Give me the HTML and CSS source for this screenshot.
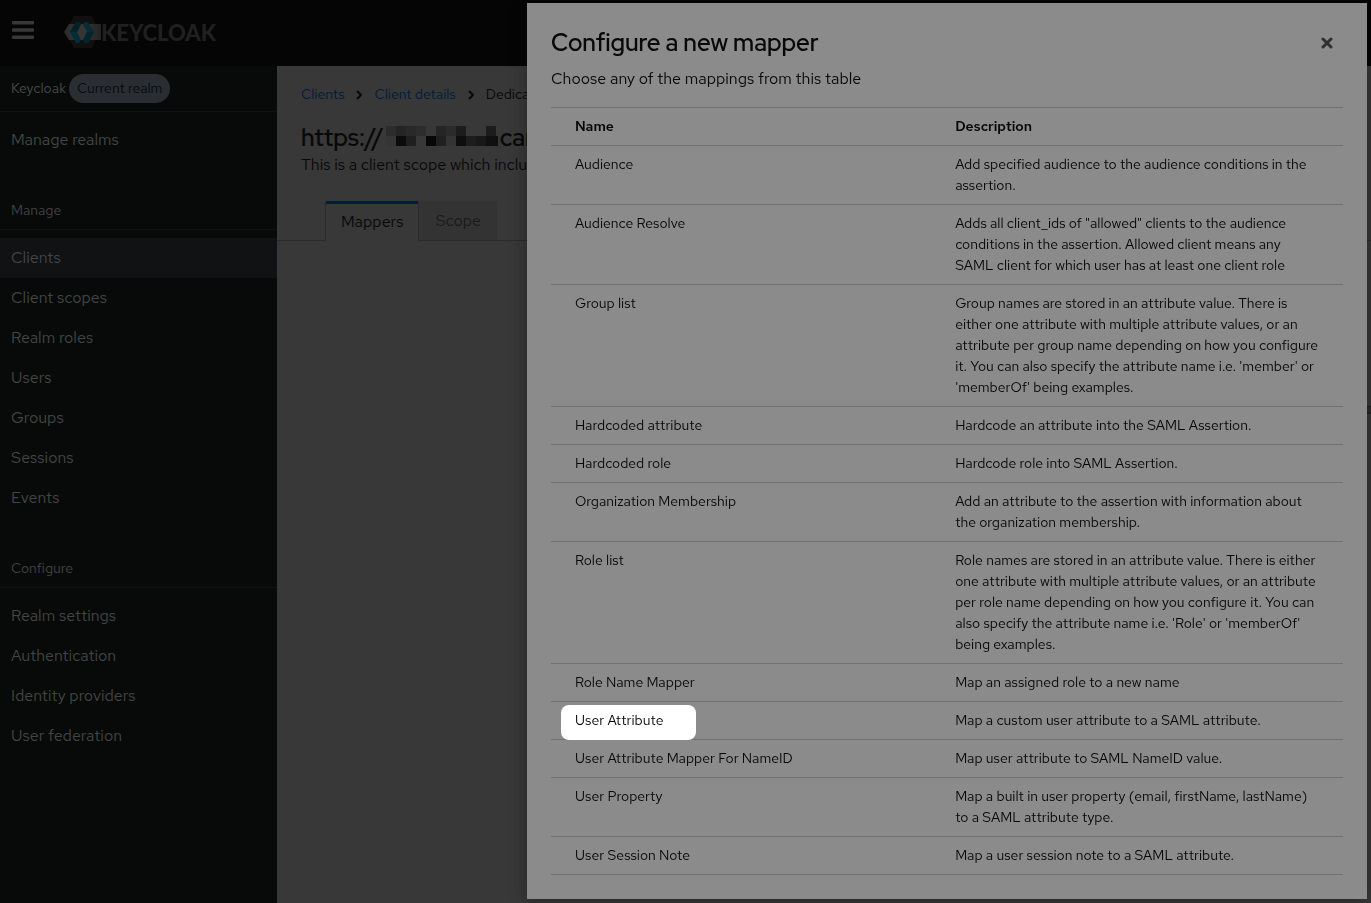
FILE: index.html
```html
<!DOCTYPE html>
<html lang="en">
<head>
<meta charset="utf-8">
<title>Keycloak Administration Console</title>
<link rel="stylesheet" href="styles.css">
</head>
<body>
<div class="page">
  <header class="masthead">
    <button type="button" class="menu-toggle" aria-label="Global navigation">
      <svg width="22" height="18" viewBox="0 0 22 18" fill="currentColor"><rect width="22" height="3.4" rx="1"/><rect y="7.3" width="22" height="3.4" rx="1"/><rect y="14.6" width="22" height="3.4" rx="1"/></svg>
    </button>
    <a class="brand" href="#">
      <svg width="37" height="32" viewBox="0 0 37 32">
        <defs>
          <linearGradient id="band" x1="0" x2="1"><stop offset="0" stop-color="#2c2c2c"/><stop offset=".5" stop-color="#363636"/><stop offset="1" stop-color="#232323"/></linearGradient>
        </defs>
        <path d="M10 0h18l7 16-7 16H10L2 16z" fill="#101010"/>
        <path d="M5 8h32v16H5L0 16z" fill="url(#band)"/>
        <path d="M16 8h6l4 8-4 8h-6l-4-8z" fill="#363636"/>
        <path d="M12 6h3l2 2-4 8 4 8-2 3h-3L6 16z" fill="#062c35"/>
        <path d="M12 6h3l2 2-4 8H6z" fill="#052229"/>
        <path d="M24 6h-3l-2 2 4 8-4 8 2 3h3l6-11z" fill="#062c35"/>
        <path d="M23 16h7l-6 11h-3l-2-3z" fill="#05252d"/>
      </svg>
      <span>KEYCLOAK</span>
    </a>
  </header>

  <nav class="sidebar">
    <div class="realm">Keycloak <span class="realm-label">Current realm</span></div>
    <ul class="nav-list">
      <li><a href="#">Manage realms</a></li>
    </ul>
    <h2 class="nav-title">Manage</h2>
    <ul class="nav-list">
      <li><a href="#" class="current">Clients</a></li>
      <li><a href="#">Client scopes</a></li>
      <li><a href="#">Realm roles</a></li>
      <li><a href="#">Users</a></li>
      <li><a href="#">Groups</a></li>
      <li><a href="#">Sessions</a></li>
      <li><a href="#">Events</a></li>
    </ul>
    <h2 class="nav-title">Configure</h2>
    <ul class="nav-list">
      <li><a href="#">Realm settings</a></li>
      <li><a href="#">Authentication</a></li>
      <li><a href="#">Identity providers</a></li>
      <li><a href="#">User federation</a></li>
    </ul>
  </nav>

  <main class="content">
    <div class="breadcrumb">
      <a href="#">Clients</a>
      <svg width="6" height="10" viewBox="0 0 6 10"><path d="M1 1l4 4-4 4" fill="none" stroke="currentColor" stroke-width="2"/></svg>
      <a href="#">Client details</a>
      <svg width="6" height="10" viewBox="0 0 6 10"><path d="M1 1l4 4-4 4" fill="none" stroke="currentColor" stroke-width="2"/></svg>
      <span>Dedicated scopes</span>
    </div>
    <h1 class="scope-name">
      <span>https://</span>
      <svg width="112" height="24" viewBox="0 0 112 24" shape-rendering="crispEdges">
        <path d="M0 0h10v10H0z" fill="#2c2c2c"/><path d="M10 0h10v10H10z" fill="#252525"/><path d="M20 0h10v10H20z" fill="#292929"/><path d="M30 0h10v10H30z" fill="#2d2d2d"/><path d="M50 0h10v10H50z" fill="#252525"/><path d="M60 0h10v10H60z" fill="#2b2b2b"/><path d="M70 0h10v10H70z" fill="#1c1c1c"/><path d="M100 0h10v10h-10z" fill="#1c1c1c"/>
        <path d="M0 10h10v10H0z" fill="#353535"/><path d="M10 10h10v10H10z" fill="#0b0b0b"/><path d="M20 10h10v10H20z" fill="#1f1f1f"/><path d="M40 10h10v10H40z" fill="#070707"/><path d="M50 10h10v10H50z" fill="#202020"/><path d="M60 10h10v10H60z" fill="#343434"/><path d="M70 10h10v10H70z" fill="#0e0e0e"/><path d="M80 10h10v10H80z" fill="#1d1d1d"/><path d="M90 10h10v10H90z" fill="#181818"/><path d="M100 10h12v10h-12z" fill="#101010"/>
      </svg>
      <span>can</span>
    </h1>
    <p class="scope-text">This is a client scope which includes</p>
    <div class="tabs">
      <button type="button" class="tab active">Mappers</button>
      <button type="button" class="tab">Scope</button>
    </div>
  </main>
</div>

<div class="edge-handle"></div>

<div class="modal" role="dialog" aria-labelledby="modal-title">
  <div class="modal-head">
    <h1 id="modal-title">Configure a new mapper</h1>
    <button type="button" class="close" aria-label="Close">
      <svg width="12" height="12" viewBox="0 0 12 12"><path d="M2 2l8 8M10 2l-8 8" stroke="currentColor" stroke-width="3" stroke-linecap="round"/></svg>
    </button>
  </div>
  <p class="modal-text">Choose any of the mappings from this table</p>
  <table class="mappers">
    <thead>
      <tr><th>Name</th><th>Description</th></tr>
    </thead>
    <tbody>
      <tr><td>Audience</td><td>Add specified audience to the audience conditions in the assertion.</td></tr>
      <tr><td>Audience Resolve</td><td>Adds all client_ids of "allowed" clients to the audience conditions in the assertion. Allowed client means any SAML client for which user has at least one client role</td></tr>
      <tr><td>Group list</td><td>Group names are stored in an attribute value. There is either one attribute with multiple attribute values, or an attribute per group name depending on how you configure it. You can also specify the attribute name i.e. 'member' or 'memberOf' being examples.</td></tr>
      <tr><td>Hardcoded attribute</td><td>Hardcode an attribute into the SAML Assertion.</td></tr>
      <tr><td>Hardcoded role</td><td>Hardcode role into SAML Assertion.</td></tr>
      <tr><td>Organization Membership</td><td>Add an attribute to the assertion with information about the organization membership.</td></tr>
      <tr><td>Role list</td><td>Role names are stored in an attribute value. There is either one attribute with multiple attribute values, or an attribute per role name depending on how you configure it. You can also specify the attribute name i.e. 'Role' or 'memberOf' being examples.</td></tr>
      <tr><td>Role Name Mapper</td><td>Map an assigned role to a new name</td></tr>
      <tr><td><span class="highlight">User Attribute</span></td><td>Map a custom user attribute to a SAML attribute.</td></tr>
      <tr><td>User Attribute Mapper For NameID</td><td>Map user attribute to SAML NameID value.</td></tr>
      <tr><td>User Property</td><td>Map a built in user property (email, firstName, lastName) to a SAML attribute type.</td></tr>
      <tr><td>User Session Note</td><td>Map a user session note to a SAML attribute.</td></tr>
    </tbody>
  </table>
</div>
</body>
</html>
```
FILE: styles.css
```css
* {
    box-sizing: border-box;
}

body {
    margin: 0;
    background: #383838;
    color: #080808;
    font-family: "Red Hat Text", "Open Sans", "Noto Sans", sans-serif;
    font-size: 14px;
    line-height: 21px;
}

h1, h2, p, ul {
    margin: 0;
    padding: 0;
    font-weight: 400;
}

ul {
    list-style: none;
}

a {
    text-decoration: none;
}

button {
    border: 0;
    padding: 0;
    background: none;
    font-family: inherit;
}

svg {
    display: block;
    flex: none;
}

.page {
    display: grid;
    grid-template-columns: 277px minmax(0, 1fr);
    grid-template-rows: 66px 1fr;
    height: 100vh;
    overflow: hidden;
}

/* masthead */
.masthead {
    grid-column: 1 / 3;
    display: flex;
    align-items: center;
    gap: 30px;
    padding: 0 12px;
    background: #050505;
}

.menu-toggle {
    padding-bottom: 6px;
    color: #383838;
}

.brand {
    display: flex;
    align-items: center;
    padding-bottom: 2px;
    color: #202020;
    font-family: Lato, sans-serif;
    font-size: 22px;
    font-weight: 900;
}

/* sidebar */
.sidebar {
    background: #070a09;
    color: #484a49;
}

.realm {
    display: flex;
    align-items: center;
    gap: 3px;
    height: 46px;
    padding-left: 11px;
    border-bottom: 1px solid #101312;
}

.realm-label {
    padding: 4px 8px;
    border-radius: 15px;
    background: #2a2e32;
    color: #060a12;
}

.nav-list {
    padding: 8px 0;
}

.nav-list a {
    display: block;
    padding: 8px 11px;
    color: #434544;
    font-size: 16px;
    line-height: 24px;
}

.nav-list .current {
    background: #101214;
}

.nav-title {
    margin-top: 24px;
    padding: 8px 11px;
    border-bottom: 1px solid #0f1211;
    color: #414342;
    font-size: 14px;
}

/* client scope page */
.content {
    white-space: nowrap;
}

.breadcrumb {
    display: flex;
    align-items: center;
    gap: 12px;
    padding: 18px 24px;
}

.breadcrumb a {
    color: #001c3c;
}

.scope-name {
    display: flex;
    align-items: center;
    gap: 2px;
    padding: 0 24px;
    font-family: "Red Hat Display", "Red Hat Text", "Open Sans", sans-serif;
    font-size: 24px;
    font-weight: 600;
    line-height: 30px;
}

.scope-text {
    padding: 0 24px;
    font-size: 16px;
    line-height: 24px;
}

.tabs {
    display: flex;
    margin-top: 24px;
    padding: 0 48px;
    border-bottom: 1px solid #2b2b2b;
}

.tab {
    height: 39px;
    padding: 0 16px;
    background: #333;
    color: #1a1a1a;
    font-size: 16px;
}

.tab.active {
    height: 40px;
    margin-bottom: -1px;
    padding: 0 15px;
    border: solid #2b2b2b;
    border-width: 0 1px;
    background: #383838;
    box-shadow: inset 0 3px #001d3f;
    color: #080808;
}

.edge-handle {
    position: fixed;
    top: 45%;
    right: 0;
    width: 4px;
    height: 8px;
    border: solid #222;
    border-width: 1px 0 2px;
    background: #2c2c2c;
}

/* mapper dialog */
.modal {
    position: fixed;
    top: 3px;
    right: 4px;
    bottom: 4px;
    width: 840px;
    max-width: calc(100% - 8px);
    padding: 24px;
    overflow: hidden;
    background: #8b8b8b;
    box-shadow: 0 4px 16px rgba(0, 0, 0, .3);
}

.modal-head {
    display: flex;
    justify-content: space-between;
    align-items: center;
}

.modal-head h1 {
    font-family: "Red Hat Display", "Red Hat Text", "Open Sans", sans-serif;
    font-size: 24px;
    font-weight: 600;
    line-height: 32px;
}

.close {
    padding: 10px;
    color: #303030;
}

.modal-text {
    padding: 8px 0 16px;
    font-size: 16px;
    line-height: 24px;
}

.mappers {
    width: 100%;
    table-layout: fixed;
    border-collapse: separate;
    border-spacing: 0;
    border-top: 1px solid #717171;
}

.mappers th,
.mappers td {
    padding: 8px 24px;
    border-bottom: 1px solid #717171;
    text-align: left;
    vertical-align: top;
}

.mappers th {
    font-weight: 600;
}

.mappers th:first-child {
    width: 48%;
}

.highlight {
    position: relative;
    z-index: 0;
}

.highlight::before {
    content: "";
    position: absolute;
    z-index: -1;
    top: -6px;
    left: -14px;
    width: 135px;
    height: 35px;
    border-radius: 8px;
    background: #fff;
}
```
